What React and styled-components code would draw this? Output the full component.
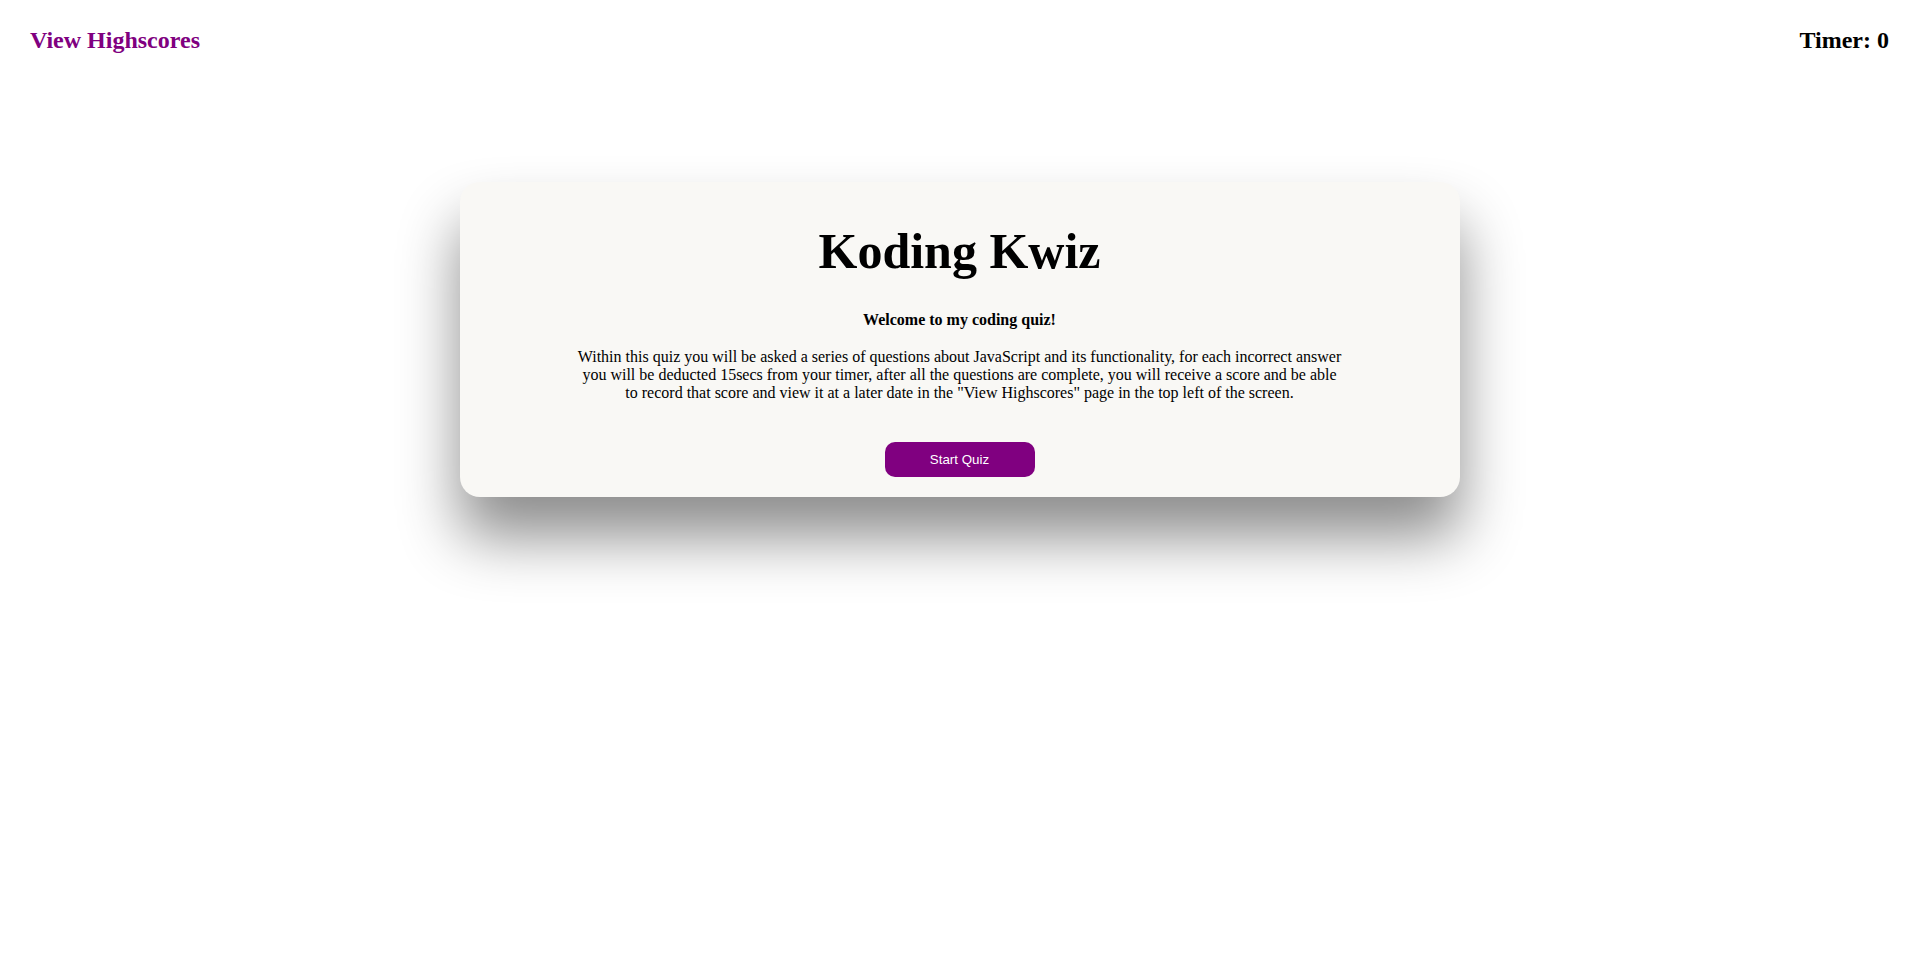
import React, { useState } from "react";
import styled, { createGlobalStyle } from "styled-components";

const GlobalStyle = createGlobalStyle`
  html, body {
    margin: 0;
    padding: 0;
    background: #ffffff;
    font-family: "Liberation Serif", "Times New Roman", serif;
    color: #000000;
  }
`;

const Page = styled.div`
  min-height: 974px;
  display: flex;
  flex-direction: column;
`;

const TopBar = styled.header`
  display: flex;
  justify-content: space-between;
  align-items: center;
  padding: 27px 30px 0;
`;

const NavLink = styled.a`
  font-size: 24px;
  font-weight: bold;
  line-height: 27.6px;
  color: ${(p) => p.color || "#000000"};
  text-decoration: none;
  cursor: pointer;
`;

const Card = styled.main`
  width: 1000px;
  box-sizing: border-box;
  margin: 127px auto 0;
  padding: 41px 0 20px;
  background: #f9f8f5;
  border-radius: 20px;
  box-shadow: 0 40px 60px rgba(0, 0, 0, 0.45);
  display: flex;
  flex-direction: column;
  align-items: center;
  text-align: center;
`;

const Title = styled.h1`
  margin: 0;
  font-size: 50px;
  line-height: 57.5px;
  font-weight: bold;
`;

const Intro = styled.p`
  margin: 31px 0 0;
  font-size: 16px;
  line-height: 18.4px;
  font-weight: ${(p) => (p.bold ? "bold" : "normal")};
  max-width: ${(p) => (p.wide ? "766px" : "none")};
`;

const Description = styled(Intro)`
  margin-top: 18px;
`;

const StartButton = styled.button`
  margin-top: 39px;
  width: 150px;
  height: 35px;
  border: none;
  border-radius: 10px;
  background: #800080;
  color: #ffffff;
  font-family: "Liberation Sans", Arial, sans-serif;
  font-size: 13.33px;
  cursor: pointer;
`;

export default function App() {
  const [timer] = useState(0);

  return (
    <Page>
      <GlobalStyle />
      <TopBar>
        <NavLink color="#800080">View Highscores</NavLink>
        <NavLink as="div">Timer: {timer}</NavLink>
      </TopBar>
      <Card>
        <Title>Koding Kwiz</Title>
        <Intro bold>Welcome to my coding quiz!</Intro>
        <Description wide>
          Within this quiz you will be asked a series of questions about
          JavaScript and its functionality, for each incorrect answer you will
          be deducted 15secs from your timer, after all the questions are
          complete, you will receive a score and be able to record that score
          and view it at a later date in the "View Highscores" page in the top
          left of the screen.
        </Description>
        <StartButton>Start Quiz</StartButton>
      </Card>
    </Page>
  );
}
